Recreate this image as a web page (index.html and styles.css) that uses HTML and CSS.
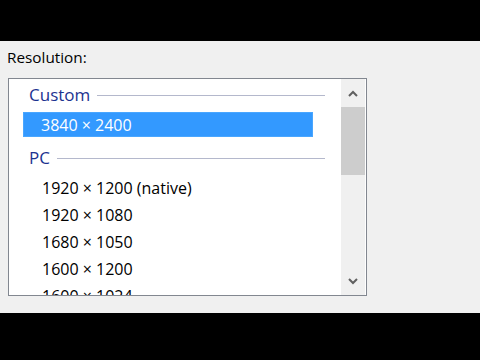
FILE: index.html
```html
<!DOCTYPE html>
<html>
<head>
<meta charset="utf-8">
<link rel="stylesheet" href="styles.css">
</head>
<body>
<div class="top"></div>
<div class="panel">
  <div class="label">Resolution:</div>
  <div class="box">
    <div class="list">
      <div class="inner">
        <div class="group"><span class="gname">Custom</span><span class="gline"></span></div>
        <div class="item selected"><span>3840 × 2400</span></div>
        <div class="group"><span class="gname">PC</span><span class="gline"></span></div>
        <div class="item"><span>1920 × 1200 (native)</span></div>
        <div class="item"><span>1920 × 1080</span></div>
        <div class="item"><span>1680 × 1050</span></div>
        <div class="item"><span>1600 × 1200</span></div>
        <div class="item"><span>1600 × 1024</span></div>
      </div>
    </div>
    <div class="scrollbar">
      <div class="arrow">
        <svg width="10" height="7" viewBox="0 0 10 7"><path d="M1 6 L5 2 L9 6" fill="none" stroke="#606060" stroke-width="2"/></svg>
      </div>
      <div class="thumb"></div>
      <div class="track"></div>
      <div class="arrow">
        <svg width="10" height="7" viewBox="0 0 10 7"><path d="M1 1 L5 5 L9 1" fill="none" stroke="#606060" stroke-width="2"/></svg>
      </div>
    </div>
  </div>
</div>
<div class="bottom"></div>
</body>
</html>
```
FILE: styles.css
```css
html, body {
  margin: 0;
  padding: 0;
  background: #000;
  width: 480px;
  height: 360px;
  overflow: hidden;
  font-family: "Open Sans", "Noto Sans", sans-serif;
}
.top {
  height: 41px;
}
.panel {
  height: 272px;
  background: #f0f0f0;
  box-sizing: border-box;
  padding: 4px 0 0 8px;
}
.label {
  font-size: 15.3px;
  line-height: 25px;
  color: #000;
  margin-left: -1px;
  height: 33px;
}
.box {
  width: 359px;
  height: 218px;
  box-sizing: border-box;
  border: 1px solid #828790;
  background: #fff;
  display: flex;
}
.list {
  flex: 1;
  overflow: hidden;
}
.inner {
  margin-top: -4px;
}
.group {
  height: 36px;
  display: flex;
  align-items: flex-start;
  padding-left: 20px;
  padding-right: 16px;
}
.gname {
  font-size: 17px;
  line-height: 17px;
  margin-top: 11px;
  color: #1c3390;
}
.gline {
  flex: 1;
  height: 1px;
  background: #b4b8cc;
  margin-top: 20px;
  margin-left: 7px;
}
.item {
  height: 27px;
  box-sizing: border-box;
  padding: 1px 28px 1px 14px;
}
.item span {
  display: block;
  height: 25px;
  box-sizing: border-box;
  padding-left: 18px;
  font-size: 16px;
  line-height: 24px;
  color: #000;
  border: 1px solid transparent;
}
.item.selected span {
  background: #3399ff;
  border-color: #49a6ff;
  color: #fff;
  padding-left: 17px;
}
.scrollbar {
  width: 24px;
  background: #f0f0f0;
  display: flex;
  flex-direction: column;
  margin-right: 1px;
}
.arrow {
  height: 28px;
  display: flex;
  align-items: center;
  justify-content: center;
}
.thumb {
  height: 68px;
  background: #cdcdcd;
}
.track {
  flex: 1;
}
```
